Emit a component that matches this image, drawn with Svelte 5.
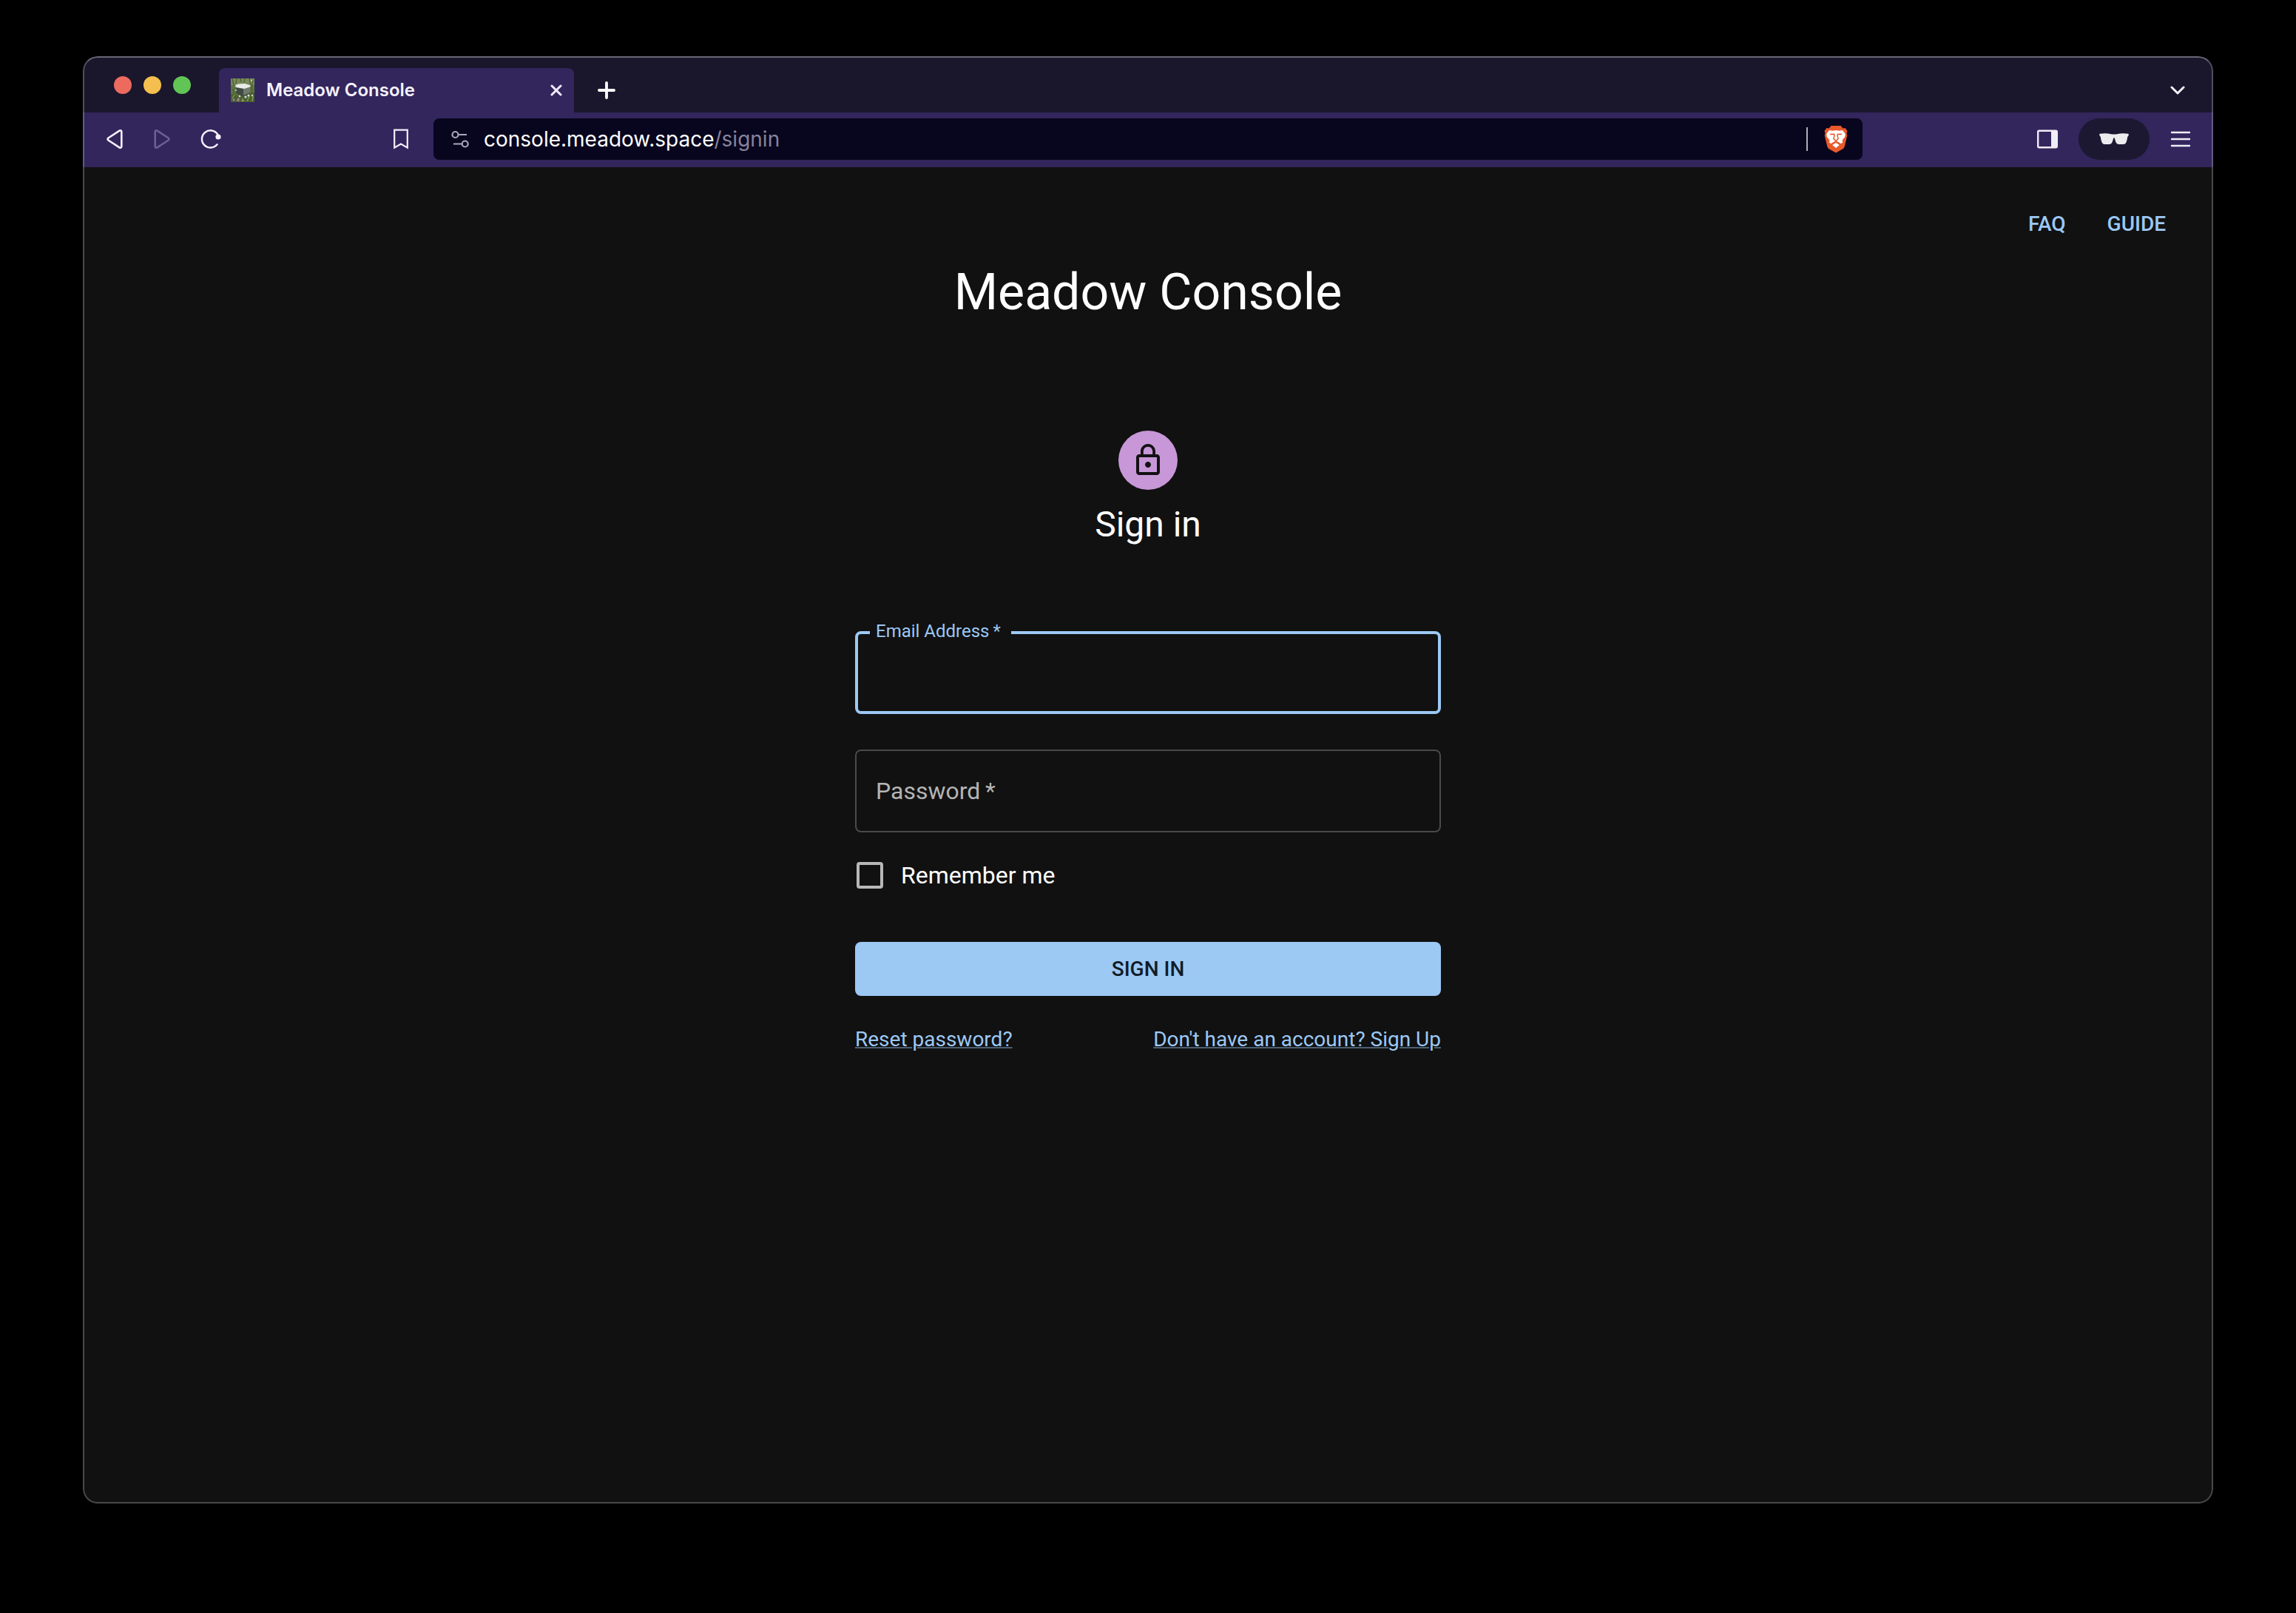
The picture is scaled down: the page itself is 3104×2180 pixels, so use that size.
<script>
  let email = $state('');
  let password = $state('');
  let remember = $state(false);
</script>

<div class="desktop">
  <div class="window">
    <header class="tabs">
      <div class="lights">
        <button class="light red" aria-label="Close window"></button>
        <button class="light yellow" aria-label="Minimize window"></button>
        <button class="light green" aria-label="Zoom window"></button>
      </div>
      <div class="tab">
        <svg class="favicon" viewBox="0 0 32 32" aria-hidden="true">
          <rect width="32" height="32" fill="#5f7440" />
          <rect width="32" height="9" fill="#788a5a" />
          <path d="M2 0l2 9M8 0l-1 7M25 0l2 10M30 2l-2 12M3 14l2 9M29 14l-1 9M13 0l1 5M19 0l-1 6" stroke="#4d6032" stroke-width="1.300" />
          <path d="M7 10v10l9 5 10-5V10z" fill="#3f4a40" />
          <path d="M17 13l9-3v9l-9 4z" fill="#6f7a70" />
          <path d="M6 10q1-2 4-2.500l9-.5 8 2.500-1 2-8 2.500-11-2z" fill="#e6ebe8" />
          <path d="M0 21l7 1 5 3 7-1 6-4 7-1v13H0z" fill="#4b6030" />
          <path d="M2 27l3-5M9 31l2-5M15 31l1-4M22 31l3-7M29 31l1-7" stroke="#829856" stroke-width="1.400" />
          <g fill="#d5dadd">
            <circle cx="12" cy="24" r="1.300" /><circle cx="20" cy="25" r="1.600" /><circle cx="24" cy="23" r="1.500" />
            <circle cx="29" cy="23" r="1.200" /><circle cx="28" cy="3" r="1" /><circle cx="7" cy="16" r="1" />
          </g>
          <g fill="#a383a0"><circle cx="4" cy="29" r="1.400" /><circle cx="10" cy="29" r="1.800" /><circle cx="17" cy="30" r="1.200" /></g>
        </svg>
        <span class="tab-title">Meadow Console</span>
        <button class="icon" aria-label="Close tab">
          <svg width="16" height="16" viewBox="0 0 16 16"><path d="M2 2l12 12M14 2L2 14" stroke="#f1ecfb" stroke-width="3" stroke-linecap="round" /></svg>
        </button>
      </div>
      <button class="icon new-tab" aria-label="New tab">
        <svg width="24" height="24" viewBox="0 0 24 24"><path d="M12 2v20M2 12h20" stroke="#fff" stroke-width="3.800" stroke-linecap="round" /></svg>
      </button>
      <button class="icon tab-search" aria-label="Search tabs">
        <svg width="20" height="12" viewBox="0 0 20 12"><path d="M2 2l8 8 8-8" fill="none" stroke="#f4f1fb" stroke-width="3" stroke-linecap="round" stroke-linejoin="round" /></svg>
      </button>
    </header>

    <nav class="toolbar" aria-label="Browser toolbar">
      <div class="nav-left">
        <button class="icon" aria-label="Back">
          <svg width="24" height="28" viewBox="0 0 24 28"><path d="M18.500 2.600L3.400 12.500a1.800 1.800 0 0 0 0 3L18.500 25.400a1.800 1.800 0 0 0 2.800-1.500V4.100a1.800 1.800 0 0 0-2.800-1.500z" fill="none" stroke="#f4f1fb" stroke-width="2.600" /></svg>
        </button>
        <button class="icon" aria-label="Forward" disabled>
          <svg width="24" height="28" viewBox="0 0 24 28"><path d="M5.500 2.600L20.600 12.500a1.800 1.800 0 0 1 0 3L5.500 25.400a1.800 1.800 0 0 1-2.800-1.500V4.100a1.800 1.800 0 0 1 2.800-1.500z" fill="none" stroke="#6c5f94" stroke-width="2.600" /></svg>
        </button>
        <button class="icon" aria-label="Reload">
          <svg width="28" height="28" viewBox="0 0 28 28"><path d="M22.500 21.300A11.600 11.600 0 1 1 23.200 7.500" fill="none" stroke="#f4f1fb" stroke-width="2.500" stroke-linecap="round" /><circle cx="24" cy="11" r="3.600" fill="#f4f1fb" /></svg>
        </button>
        <button class="icon bookmark" aria-label="Bookmark this page">
          <svg width="20" height="28" viewBox="0 0 20 28"><path d="M1.200 1.600h17.600v24L10 20.500l-8.800 5.100z" fill="none" stroke="#f4f1fb" stroke-width="2.200" /></svg>
        </button>
      </div>
      <div class="address">
        <button class="icon" aria-label="Site settings">
          <svg width="24" height="24" viewBox="0 0 24 24" fill="none" stroke="#a9a7bb" stroke-width="2.200"><circle cx="5.500" cy="6" r="4" /><path d="M9.500 6h11.500M3 18.500h11.500" /><circle cx="18.700" cy="18.500" r="4" /></svg>
        </button>
        <button class="url"><span>console.meadow.space</span><span class="path">/signin</span></button>
        <span class="divider"></span>
        <button class="icon" aria-label="Brave Shields">
          <svg width="32" height="38" viewBox="0 0 32 38">
            <path d="M9.500 1h13l3 3.500 3-.5 3 4-1 3 .8 3-3.300 14c-.5 2-1.500 3.500-3 4.500L16 37.500 7 32.500c-1.500-1-2.500-2.500-3-4.500L.700 14l.8-3-1-3 3-4 3 .5z" fill="#e8592b" />
            <path d="M16 7l4.500.8 4.500-.8 3.800 5-.6 4-3.700 4.500.8 3-2.800 1.800-4.500-2.800h-4l-4.500 2.800L6.700 23.500l.8-3L3.800 16l-.6-4L7 7l4.500.8z" fill="#fff" />
            <path d="M16 24l4.800 3-4.800 4-4.800-4z" fill="#fff" />
            <path d="M8 12.500l5.500-.3.500 1.500-1 5 3 2.800 3-2.800-1-5 .5-1.500 5.500.3" fill="none" stroke="#e8592b" stroke-width="1.500" />
            <path d="M10.500 25l5.500-2.800 5.500 2.800" fill="none" stroke="#e8592b" stroke-width="1.300" />
          </svg>
        </button>
      </div>
      <div class="nav-right">
        <button class="icon" aria-label="Sidebar">
          <svg width="28" height="26" viewBox="0 0 28 26"><rect x="1.200" y="1.700" width="25.600" height="22.600" rx="1.500" fill="none" stroke="#efedf6" stroke-width="2.400" /><path d="M19 1h8v24h-8z" fill="#efedf6" /></svg>
        </button>
        <button class="private" aria-label="Private window">
          <svg width="40" height="16" viewBox="0 0 40 16"><path d="M1 .8Q9-.3 16 1.200q4 .8 8 0Q31-.3 39 .8q1 .2.800 1.200-.3 2-1.500 2.800-.5 4-1.700 7.200-1 3-4 3h-6q-3 0-4.300-3.200L20.800 7q-.8-1.800-1.600 0l-1.500 4.800Q16.400 15 13.400 15h-6q-3 0-4-3Q2.200 8.800 1.700 4.800.500 4 .200 2 0 1 1 .8z" fill="#ececef" /></svg>
        </button>
        <button class="icon" aria-label="Menu">
          <svg width="28" height="24" viewBox="0 0 28 24"><path d="M2 3h24M2 12h24M2 21h24" stroke="#efedf6" stroke-width="2.400" stroke-linecap="round" /></svg>
        </button>
      </div>
    </nav>

    <main>
      <div class="links">
        <a href="#faq">FAQ</a>
        <a href="#guide">GUIDE</a>
      </div>
      <h1>Meadow Console</h1>
      <div class="avatar">
        <svg width="48" height="48" viewBox="0 0 24 24" fill="#121212" aria-hidden="true"><path d="M12 17c1.100 0 2-.9 2-2s-.9-2-2-2-2 .9-2 2 .9 2 2 2zm6-9h-1V6c0-2.760-2.240-5-5-5S7 3.240 7 6v2H6c-1.100 0-2 .9-2 2v10c0 1.100.9 2 2 2h12c1.100 0 2-.9 2-2V10c0-1.100-.9-2-2-2zM8.900 6c0-1.710 1.390-3.100 3.100-3.100s3.100 1.390 3.100 3.100v2H8.900V6zM18 20H6V10h12v10z" /></svg>
      </div>
      <h2>Sign in</h2>
      <form onsubmit={(event) => event.preventDefault()}>
        <div class="field active">
          <label for="email">Email Address&thinsp;*</label>
          <input id="email" type="email" autocomplete="email" bind:value={email} />
        </div>
        <div class="field">
          <label for="password">Password&thinsp;*</label>
          <input id="password" type="password" autocomplete="current-password" bind:value={password} />
        </div>
        <label class="remember">
          <input type="checkbox" bind:checked={remember} />
          <span>Remember me</span>
        </label>
        <button class="submit" type="submit">SIGN IN</button>
        <div class="help">
          <a href="#reset">Reset password?</a>
          <a href="#signup">Don't have an account? Sign Up</a>
        </div>
      </form>
    </main>
  </div>
</div>

<style>
  :global(body) {
    background: #000;
  }
  .desktop {
    box-sizing: border-box;
    min-height: 100vh;
    padding: 76px 112px 148px;
    display: flex;
    flex-direction: column;
  }
  .window {
    position: relative;
    flex: 1;
    display: flex;
    flex-direction: column;
    border-radius: 20px;
    overflow: hidden;
    background: #111;
    font-family: Roboto, sans-serif;
    color: #fff;
  }
  .window::after {
    content: '';
    position: absolute;
    inset: 0;
    border: 2px solid rgba(255, 255, 255, 0.24);
    border-top-color: rgba(255, 255, 255, 0.34);
    border-radius: 20px;
    pointer-events: none;
  }
  button {
    margin: 0;
    padding: 0;
    border: 0;
    background: none;
    font: inherit;
    color: inherit;
  }
  svg {
    display: block;
  }
  .icon {
    display: flex;
    align-items: center;
    justify-content: center;
  }
  .tabs {
    display: flex;
    align-items: flex-end;
    height: 76px;
    background: #1a172c;
    font-family: Inter, sans-serif;
  }
  .lights {
    display: flex;
    gap: 16px;
    width: 142px;
    padding: 0 0 25px 42px;
  }
  .light {
    width: 24px;
    height: 24px;
    border-radius: 50%;
  }
  .red {
    background: #ed6a5f;
  }
  .yellow {
    background: #f5bf4f;
  }
  .green {
    background: #61c555;
  }
  .tab {
    box-sizing: border-box;
    display: flex;
    align-items: center;
    width: 480px;
    height: 60px;
    padding: 0 16px;
    border-radius: 8px 8px 0 0;
    background: #32265d;
  }
  .favicon {
    width: 32px;
    height: 32px;
  }
  .tab-title {
    flex: 1;
    padding-left: 16px;
    font-size: 24px;
    line-height: 32px;
    font-weight: 600;
    color: #f6f2ff;
  }
  .new-tab {
    width: 88px;
    height: 60px;
  }
  .tab-search {
    width: 56px;
    height: 60px;
    margin: 0 20px 0 auto;
  }
  .toolbar {
    display: grid;
    grid-template-columns: 474px 1fr 474px;
    height: 74px;
    padding-bottom: 2px;
    box-sizing: border-box;
    background: #32265d;
  }
  .nav-left,
  .nav-right {
    display: flex;
    align-items: center;
    gap: 40px;
  }
  .nav-left {
    padding: 0 34px 0 31px;
  }
  .bookmark {
    margin-left: auto;
  }
  .nav-right {
    gap: 28px;
    justify-content: flex-end;
    padding-right: 30px;
  }
  .private {
    display: flex;
    align-items: center;
    justify-content: center;
    width: 96px;
    height: 56px;
    border-radius: 28px;
    background: #1c1831;
  }
  .address {
    display: flex;
    align-items: center;
    height: 56px;
    margin: 8px 0;
    padding: 0 20px 0 24px;
    box-sizing: border-box;
    border-radius: 8px;
    background: #08051e;
  }
  .url {
    flex: 1;
    padding-left: 20px;
    text-align: left;
    font-family: Inter, sans-serif;
    font-size: 28px;
    line-height: 36px;
  }
  .path {
    color: #85839a;
  }
  .divider {
    width: 2px;
    height: 32px;
    margin-right: 22px;
    background: #aeacba;
  }
  main {
    flex: 1;
    display: flex;
    flex-direction: column;
    align-items: center;
  }
  .links {
    align-self: flex-end;
    display: flex;
    gap: 56px;
    padding: 53px 64px 0 0;
    font-size: 28px;
    line-height: 48px;
    font-weight: 500;
  }
  a {
    color: #9cc8f4;
  }
  .links a {
    text-decoration: none;
  }
  h1,
  h2 {
    margin: 0;
    font-weight: 400;
  }
  h1 {
    margin-top: 26px;
    font-size: 68px;
    line-height: 84px;
  }
  .avatar {
    display: flex;
    align-items: center;
    justify-content: center;
    width: 80px;
    height: 80px;
    margin-top: 145px;
    border-radius: 50%;
    background: #c797d8;
  }
  h2 {
    margin-top: 15px;
    font-size: 48px;
    line-height: 64px;
  }
  form {
    width: 792px;
    max-width: 100%;
    margin-top: 112px;
  }
  .field {
    position: relative;
    margin-bottom: 48px;
  }
  .field input {
    display: block;
    box-sizing: border-box;
    width: 100%;
    height: 112px;
    padding: 0 28px;
    border: 2px solid #4a4a4a;
    border-radius: 8px;
    outline: 0;
    background: transparent;
    font: inherit;
    font-size: 32px;
    color: #fff;
  }
  .field.active input {
    border: 4px solid #9cc8f4;
  }
  .field label {
    position: absolute;
    top: 32px;
    left: 28px;
    font-size: 32px;
    line-height: 48px;
    color: #b4b4b4;
  }
  .field.active label {
    top: -16px;
    left: 20px;
    padding: 0 14px 0 8px;
    background: #111;
    font-size: 24px;
    line-height: 32px;
    color: #9cc8f4;
  }
  .remember {
    display: flex;
    align-items: center;
    gap: 24px;
    margin: -14px 0 66px;
    padding-left: 2px;
    font-size: 32px;
    line-height: 48px;
  }
  .remember input {
    appearance: none;
    box-sizing: border-box;
    width: 36px;
    height: 36px;
    margin: 0;
    border: 4px solid #b8b8b8;
    border-radius: 4px;
  }
  .remember input:checked {
    border-color: #9cc8f4;
    background: #9cc8f4;
  }
  .submit {
    display: block;
    width: 100%;
    height: 73px;
    border-radius: 8px;
    background: #9cc8f4;
    font-size: 28px;
    font-weight: 500;
    color: #111c26;
  }
  .help {
    display: flex;
    justify-content: space-between;
    margin-top: 39px;
    font-size: 28px;
    line-height: 40px;
  }
  .help a {
    text-decoration-color: #4c6074;
    text-decoration-thickness: 2px;
  }
</style>
